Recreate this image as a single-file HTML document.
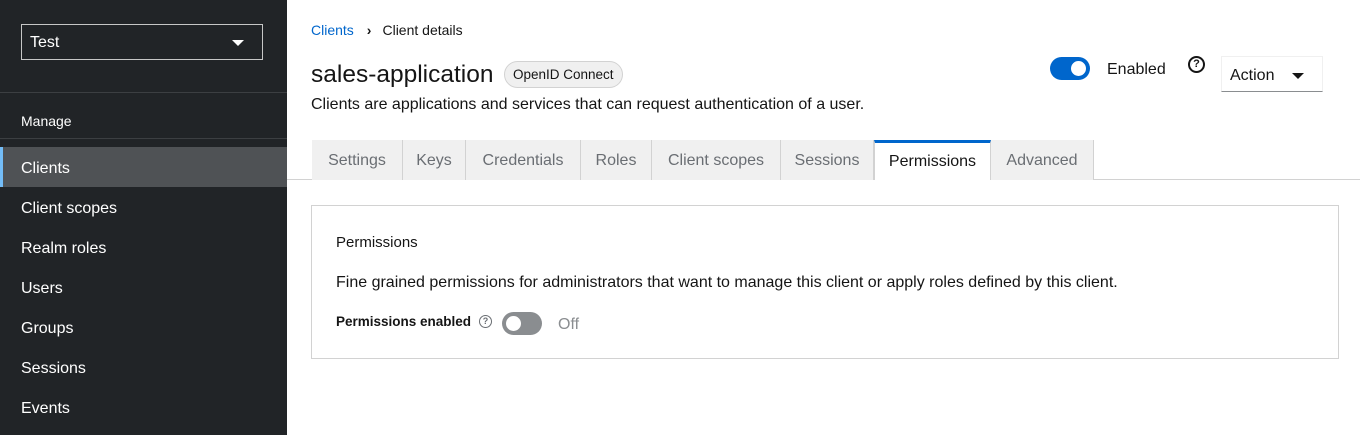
<html><head><style>
*{margin:0;padding:0;box-sizing:border-box}
body{width:1360px;height:435px;overflow:hidden;font-family:"Liberation Sans",sans-serif;background:#fff;position:relative;color:#151515}
.a{position:absolute;white-space:nowrap}
.sb{position:absolute;left:0;top:0;width:287px;height:435px;background:#212427}
.nav{position:absolute;left:21px;color:#fff;font-size:16px}
.tab{position:absolute;top:140px;height:40px;background:#f0f0f0;border-right:1px solid #d2d2d2;color:#6a6e73;font-size:16px;text-align:center;line-height:42px}
</style></head><body>
<div class="sb">
 <div class="a" style="left:21px;top:24px;width:242px;height:36px;border:1px solid #c7c7c7;color:#fff;font-size:16px;line-height:36px;padding-left:8px">Test<span style="position:absolute;right:18px;top:15px;border-left:6px solid transparent;border-right:6px solid transparent;border-top:6px solid #fff"></span></div>
 <div class="a" style="left:0;top:92px;width:287px;height:1px;background:#3c3f42"></div>
 <div class="a" style="left:21px;top:113px;color:#fff;font-size:14px">Manage</div>
 <div class="a" style="left:0;top:138px;width:287px;height:1px;background:#3c3f42"></div>
 <div class="a" style="left:0;top:147px;width:287px;height:40px;background:#4f5255;border-left:3px solid #73bcf7"></div>
 <div class="nav a" style="top:160px">Clients</div>
 <div class="nav a" style="top:200px">Client scopes</div>
 <div class="nav a" style="top:240px">Realm roles</div>
 <div class="nav a" style="top:280px">Users</div>
 <div class="nav a" style="top:320px">Groups</div>
 <div class="nav a" style="top:360px">Sessions</div>
 <div class="nav a" style="top:400px">Events</div>
</div>
<div class="a" style="left:311px;top:22px;font-size:14px"><span style="color:#06c">Clients</span><span style="margin:0 11px 0 13px;font-weight:bold">›</span>Client details</div>
<div class="a" style="left:311px;top:61px;font-size:24.5px">sales-application</div>
<div class="a" style="left:504px;top:61px;height:27px;border:1px solid #d2d2d2;border-radius:14px;background:#f0f0f0;font-size:13.5px;line-height:25px;padding:0 8px">OpenID Connect</div>
<div class="a" style="left:311px;top:96px;font-size:16px">Clients are applications and services that can request authentication of a user.</div>
<div class="a" style="left:1050px;top:57px;width:40px;height:23px;border-radius:12px;background:#06c"><span style="position:absolute;right:4px;top:4px;width:15px;height:15px;border-radius:50%;background:#fff"></span></div>
<div class="a" style="left:1107px;top:61px;font-size:16px">Enabled</div>
<div class="a" style="left:1188px;top:56px;width:17px;height:17px;border:2px solid #151515;border-radius:50%;font-size:11px;font-weight:bold;text-align:center;line-height:13px">?</div>
<div class="a" style="left:1221px;top:56px;width:102px;height:36px;border:1px solid #f0f0f0;border-bottom:1px solid #8a8d90;font-size:16px;line-height:38px;padding-left:8px">Action<span style="position:absolute;right:18px;top:16px;border-left:6px solid transparent;border-right:6px solid transparent;border-top:6px solid #151515"></span></div>
<div class="a" style="left:287px;top:179px;width:1073px;height:1px;background:#d2d2d2"></div>
<div class="tab" style="left:312px;width:91px">Settings</div>
<div class="tab" style="left:403px;width:63px">Keys</div>
<div class="tab" style="left:466px;width:115px">Credentials</div>
<div class="tab" style="left:581px;width:71px">Roles</div>
<div class="tab" style="left:652px;width:129px">Client scopes</div>
<div class="tab" style="left:781px;width:93px">Sessions</div>
<div class="tab" style="left:874px;width:117px;background:#fff;color:#151515;border-top:3px solid #06c;line-height:38px;border-left:1px solid #d2d2d2">Permissions</div>
<div class="tab" style="left:991px;width:103px">Advanced</div>
<div class="a" style="left:311px;top:205px;width:1028px;height:154px;border:1px solid #d2d2d2"></div>
<div class="a" style="left:336px;top:234px;font-size:15px">Permissions</div>
<div class="a" style="left:336px;top:274px;font-size:16px">Fine grained permissions for administrators that want to manage this client or apply roles defined by this client.</div>
<div class="a" style="left:336px;top:314px;font-size:13.5px;font-weight:bold">Permissions enabled</div>
<div class="a" style="left:479px;top:315px;width:13px;height:13px;border:1px solid #6a6e73;border-radius:50%;font-size:9px;text-align:center;line-height:11px;color:#6a6e73;font-weight:bold">?</div>
<div class="a" style="left:502px;top:312px;width:40px;height:23px;border-radius:12px;background:#8a8d90"><span style="position:absolute;left:4px;top:4px;width:15px;height:15px;border-radius:50%;background:#fff"></span></div>
<div class="a" style="left:558px;top:316px;font-size:16px;color:#8a8d90">Off</div>
</body></html>
